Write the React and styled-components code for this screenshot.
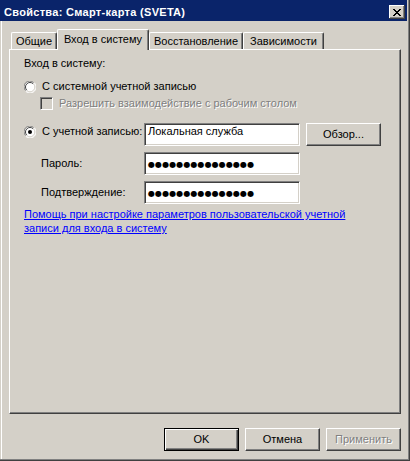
import styled, { createGlobalStyle } from "styled-components";

const GlobalStyle = createGlobalStyle`
  html, body {
    margin: 0;
    padding: 0;
    background: #d4d0c8;
  }
  body {
    font-family: "Liberation Sans", Arial, sans-serif;
    font-size: 11px;
    color: #000;
  }
`;

const Window = styled.div`
  width: 410px;
  height: 461px;
  box-sizing: border-box;
  padding: 0 3px 2px 0;
  background: #d4d0c8;
  box-shadow: inset -1px -1px #404040, inset -2px -2px #808080;
  display: flex;
  flex-direction: column;
`;

const TitleBar = styled.div`
  height: 21px;
  flex-shrink: 0;
  background: #0a246a;
  display: flex;
  justify-content: space-between;
  align-items: flex-start;
  padding: 0 2px 0 4px;
`;

const Title = styled.div`
  margin-top: 6px;
  color: #fff;
  font-weight: bold;
  font-size: 11px;
  line-height: 13px;
  letter-spacing: 0.3px;
  white-space: nowrap;
`;

const CloseButton = styled.div`
  margin-top: 5px;
  width: 16px;
  height: 14px;
  box-sizing: border-box;
  background: #d4d0c8;
  box-shadow: inset -1px -1px #404040, inset 1px 1px #fff, inset -2px -2px #808080;
  display: flex;
  align-items: center;
  justify-content: center;
  svg {
    display: block;
  }
`;

const Body = styled.div`
  flex: 1;
  display: flex;
  flex-direction: column;
  padding: 8px 6px 0 9px;
  box-shadow: inset 1px 0 #d4d0c8, inset 2px 0 #fff;
`;

const TabStrip = styled.div`
  height: 20px;
  display: flex;
  align-items: flex-start;
  padding-left: 2px;
`;

const Tab = styled.div`
  position: relative;
  width: ${(p) => p.$width}px;
  height: ${(p) => (p.$active ? 21 : 17)}px;
  margin-top: ${(p) => (p.$active ? 0 : 3)}px;
  box-sizing: border-box;
  padding-bottom: ${(p) => (p.$active ? 2 : 0)}px;
  background: #d4d0c8;
  border-top: 1px solid #fff;
  border-left: 1px solid #fff;
  border-right: 1px solid #404040;
  border-radius: 2px 2px 0 0;
  box-shadow: inset -1px 0 #808080;
  z-index: ${(p) => (p.$active ? 1 : 0)};
  display: flex;
  align-items: center;
  justify-content: center;
  line-height: 13px;
  white-space: nowrap;
`;

const Panel = styled.div`
  height: 365px;
  box-sizing: border-box;
  border: 1px solid;
  border-color: #fff #404040 #404040 #fff;
  box-shadow: inset -1px -1px #808080;
  padding: 7px 0 0 14px;
  display: flex;
  flex-direction: column;
  line-height: 13px;
`;

const Heading = styled.div`
  height: 13px;
`;

const OptionRow = styled.div`
  display: flex;
  align-items: center;
  gap: 6px;
  height: 13px;
  margin-top: ${(p) => p.$top}px;
  margin-left: ${(p) => p.$indent || 0}px;
  white-space: nowrap;
`;

const DisabledText = styled.span`
  color: #808080;
  text-shadow: 1px 1px #fff;
`;

const CheckBox = styled.span`
  width: 13px;
  height: 13px;
  box-sizing: border-box;
  border: 1px solid;
  border-color: #808080 #fff #fff #808080;
  box-shadow: inset 1px 1px #404040, inset -1px -1px #d4d0c8;
  background: #d4d0c8;
  flex-shrink: 0;
`;

const FieldRow = styled.div`
  display: flex;
  align-items: center;
  height: 23px;
  margin-top: ${(p) => p.$top}px;
`;

const FieldLabel = styled.div`
  width: 120px;
  box-sizing: border-box;
  padding-left: ${(p) => p.$indent || 0}px;
  display: flex;
  align-items: center;
  gap: 6px;
  align-self: ${(p) => (p.$top ? "flex-start" : "center")};
  margin-top: ${(p) => (p.$top ? 2 : 0)}px;
  white-space: nowrap;
  svg {
    display: block;
    margin-top: 1px;
  }
`;

const TextBox = styled.div`
  width: 156px;
  height: 23px;
  box-sizing: border-box;
  background: #fff;
  border: 1px solid;
  border-color: #808080 #fff #fff #808080;
  box-shadow: inset 1px 1px #404040, inset -1px -1px #d4d0c8;
  padding: 1px 0 0 3px;
  display: flex;
  align-items: ${(p) => (p.$masked ? "center" : "flex-start")};
  white-space: nowrap;
  overflow: hidden;
`;

const Mask = styled.span`
  font-family: "DejaVu Sans", sans-serif;
  font-size: 8px;
  letter-spacing: 0.1px;
  line-height: 13px;
`;

const Button = styled.div`
  width: 75px;
  height: 23px;
  box-sizing: border-box;
  flex-shrink: 0;
  margin-left: ${(p) => p.$gap || 0}px;
  background: #d4d0c8;
  border: 1px solid;
  border-color: ${(p) => (p.$default ? "#000" : "#fff #404040 #404040 #fff")};
  box-shadow: ${(p) =>
    p.$default
      ? "inset 1px 1px #fff, inset -1px -1px #404040, inset -2px -2px #808080"
      : "inset -1px -1px #808080"};
  display: flex;
  align-items: center;
  justify-content: center;
  font-weight: normal;
  line-height: 13px;
  color: ${(p) => (p.$disabled ? "#808080" : "#000")};
  text-shadow: ${(p) => (p.$disabled ? "1px 1px #fff" : "none")};
`;

const HelpLink = styled.a`
  margin-top: 3px;
  max-width: 355px;
  line-height: 14px;
  color: #0000ff;
  text-decoration: underline;
  cursor: pointer;
`;

const ButtonRow = styled.div`
  margin-top: 14px;
  display: flex;
  justify-content: flex-end;
`;

function CloseGlyph() {
  const rows = [
    [0, 1, 6, 7],
    [1, 2, 5, 6],
    [2, 3, 4, 5],
    [3, 4],
    [2, 3, 4, 5],
    [1, 2, 5, 6],
    [0, 1, 6, 7],
  ];
  return (
    <svg width="8" height="7" viewBox="0 0 8 7" shapeRendering="crispEdges">
      {rows.map((cols, y) =>
        cols.map((x) => <rect key={`${x}-${y}`} x={x} y={y} width="1" height="1" fill="#000" />)
      )}
    </svg>
  );
}

function Radio({ checked }) {
  return (
    <svg width="12" height="12" viewBox="0 0 12 12">
      <circle cx="6" cy="6" r="5.5" fill="#fff" />
      <path d="M10 2 A5.5 5.5 0 0 0 2 10" fill="none" stroke="#808080" strokeWidth="1" transform="translate(-0.3 -0.3)" />
      <path d="M9.2 2.8 A4.5 4.5 0 0 0 2.8 9.2" fill="none" stroke="#404040" strokeWidth="1" />
      <path d="M10.3 1.7 A5.8 5.8 0 0 1 1.7 10.3" fill="none" stroke="#fff" strokeWidth="1" />
      <path d="M9.4 2.6 A4.7 4.7 0 0 1 2.6 9.4" fill="none" stroke="#d4d0c8" strokeWidth="1" />
      {checked && <circle cx="6" cy="6" r="2" fill="#000" />}
    </svg>
  );
}

const tabs = [
  { label: "Общие", width: 46 },
  { label: "Вход в систему", width: 92, active: true },
  { label: "Восстановление", width: 94 },
  { label: "Зависимости", width: 81 },
];

const dots = "●".repeat(15);

export default function App() {
  return (
    <>
      <GlobalStyle />
      <Window>
        <TitleBar>
          <Title>Свойства: Смарт-карта (SVETA)</Title>
          <CloseButton>
            <CloseGlyph />
          </CloseButton>
        </TitleBar>
        <Body>
          <TabStrip>
            {tabs.map((t) => (
              <Tab key={t.label} $width={t.width} $active={t.active}>
                {t.label}
              </Tab>
            ))}
          </TabStrip>
          <Panel>
            <Heading>Вход в систему:</Heading>
            <OptionRow $top={10}>
              <Radio />
              <span>С системной учетной записью</span>
            </OptionRow>
            <OptionRow $top={4} $indent={16}>
              <CheckBox />
              <DisabledText>Разрешить взаимодействие с рабочим столом</DisabledText>
            </OptionRow>
            <FieldRow $top={13}>
              <FieldLabel $top>
                <Radio checked />
                <span>С учетной записью:</span>
              </FieldLabel>
              <TextBox>Локальная служба</TextBox>
              <Button $gap={6}>Обзор...</Button>
            </FieldRow>
            <FieldRow $top={6}>
              <FieldLabel $indent={17}>Пароль:</FieldLabel>
              <TextBox $masked>
                <Mask>{dots}</Mask>
              </TextBox>
            </FieldRow>
            <FieldRow $top={6}>
              <FieldLabel $indent={17}>Подтверждение:</FieldLabel>
              <TextBox $masked>
                <Mask>{dots}</Mask>
              </TextBox>
            </FieldRow>
            <HelpLink>
              Помощь при настройке параметров пользовательской учетной записи для входа в систему
            </HelpLink>
          </Panel>
          <ButtonRow>
            <Button $default>OK</Button>
            <Button $gap={6}>Отмена</Button>
            <Button $gap={6} $disabled>
              Применить
            </Button>
          </ButtonRow>
        </Body>
      </Window>
    </>
  );
}
